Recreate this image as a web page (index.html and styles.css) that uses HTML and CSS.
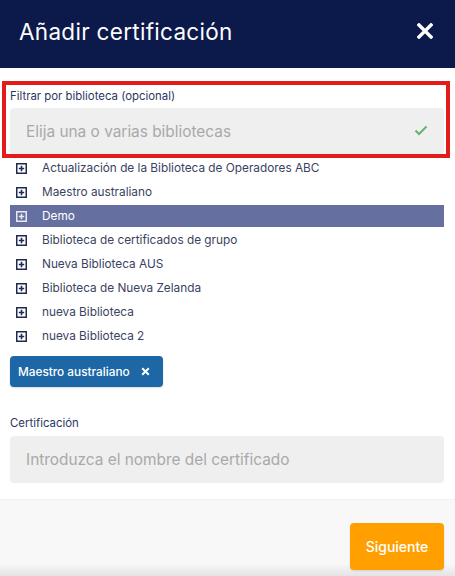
FILE: index.html
```html
<!DOCTYPE html>
<html lang="es">
<head>
<meta charset="utf-8">
<link rel="stylesheet" href="styles.css">
</head>
<body>
<div class="modal">
  <header class="head">
    <h1 class="title">Añadir certificación</h1>
    <svg class="close" width="16" height="16" viewBox="0 0 16 16"><path d="M2 2 L14 14 M14 2 L2 14" stroke="#fff" stroke-width="3.4" stroke-linecap="square"/></svg>
  </header>
  <main class="body">
    <div class="field filter">
      <label class="label">Filtrar por biblioteca (opcional)</label>
      <div class="input">
        <span class="ph">Elija una o varias bibliotecas</span>
        <svg class="check" width="14" height="11" viewBox="0 0 14 11"><path d="M1.5 5.5 L5 9 L12.5 1.5" fill="none" stroke="#66b46a" stroke-width="2"/></svg>
      </div>
      <div class="highlight"></div>
    </div>
    <ul class="tree">
      <li class="row"><svg class="plus" width="11" height="11" viewBox="0 0 11 11"><rect x="0.75" y="0.75" width="9.5" height="9.5" fill="none" stroke="currentColor" stroke-width="1.5"/><path d="M5.5 2.8 V8.2 M2.8 5.5 H8.2" stroke="currentColor" stroke-width="1.6"/></svg><span>Actualización de la Biblioteca de Operadores ABC</span></li>
      <li class="row"><svg class="plus" width="11" height="11" viewBox="0 0 11 11"><rect x="0.75" y="0.75" width="9.5" height="9.5" fill="none" stroke="currentColor" stroke-width="1.5"/><path d="M5.5 2.8 V8.2 M2.8 5.5 H8.2" stroke="currentColor" stroke-width="1.6"/></svg><span>Maestro australiano</span></li>
      <li class="row active"><svg class="plus" width="11" height="11" viewBox="0 0 11 11"><rect x="0.75" y="0.75" width="9.5" height="9.5" fill="none" stroke="currentColor" stroke-width="1.5"/><path d="M5.5 2.8 V8.2 M2.8 5.5 H8.2" stroke="currentColor" stroke-width="1.6"/></svg><span>Demo</span></li>
      <li class="row"><svg class="plus" width="11" height="11" viewBox="0 0 11 11"><rect x="0.75" y="0.75" width="9.5" height="9.5" fill="none" stroke="currentColor" stroke-width="1.5"/><path d="M5.5 2.8 V8.2 M2.8 5.5 H8.2" stroke="currentColor" stroke-width="1.6"/></svg><span>Biblioteca de certificados de grupo</span></li>
      <li class="row"><svg class="plus" width="11" height="11" viewBox="0 0 11 11"><rect x="0.75" y="0.75" width="9.5" height="9.5" fill="none" stroke="currentColor" stroke-width="1.5"/><path d="M5.5 2.8 V8.2 M2.8 5.5 H8.2" stroke="currentColor" stroke-width="1.6"/></svg><span>Nueva Biblioteca AUS</span></li>
      <li class="row"><svg class="plus" width="11" height="11" viewBox="0 0 11 11"><rect x="0.75" y="0.75" width="9.5" height="9.5" fill="none" stroke="currentColor" stroke-width="1.5"/><path d="M5.5 2.8 V8.2 M2.8 5.5 H8.2" stroke="currentColor" stroke-width="1.6"/></svg><span>Biblioteca de Nueva Zelanda</span></li>
      <li class="row"><svg class="plus" width="11" height="11" viewBox="0 0 11 11"><rect x="0.75" y="0.75" width="9.5" height="9.5" fill="none" stroke="currentColor" stroke-width="1.5"/><path d="M5.5 2.8 V8.2 M2.8 5.5 H8.2" stroke="currentColor" stroke-width="1.6"/></svg><span>nueva Biblioteca</span></li>
      <li class="row"><svg class="plus" width="11" height="11" viewBox="0 0 11 11"><rect x="0.75" y="0.75" width="9.5" height="9.5" fill="none" stroke="currentColor" stroke-width="1.5"/><path d="M5.5 2.8 V8.2 M2.8 5.5 H8.2" stroke="currentColor" stroke-width="1.6"/></svg><span>nueva Biblioteca 2</span></li>
    </ul>
    <div class="tags">
      <span class="tag">Maestro australiano <svg class="tag-x" width="9" height="9" viewBox="0 0 9 9"><path d="M1.2 1.2 L7.8 7.8 M7.8 1.2 L1.2 7.8" stroke="#fff" stroke-width="2"/></svg></span>
    </div>
    <div class="field cert">
      <label class="label">Certificación</label>
      <div class="input">
        <span class="ph">Introduzca el nombre del certificado</span>
      </div>
    </div>
  </main>
  <footer class="foot">
    <button class="next">Siguiente</button>
  </footer>
</div>
</body>
</html>
```
FILE: styles.css
```css
* { box-sizing: border-box; }
html, body { margin: 0; padding: 0; background: #fff; }
body { font-family: Inter, "Noto Sans", sans-serif; width: 455px; height: 576px; overflow: hidden; }
.modal { display: flex; flex-direction: column; height: 576px; }
.head {
  height: 68px; background: #0b1a4b; display: flex; align-items: center;
  justify-content: space-between; padding: 0 22px 6px 19px;
}
.title { margin: 0; color: #fff; font-weight: 400; font-size: 22.5px; letter-spacing: 0.3px; }
.close { display: block; }
.body { padding: 0 11px 0 10px; flex: 1; }
.field { display: flex; flex-direction: column; }
.filter { position: relative; padding-top: 21px; }
.label { font-size: 11.4px; color: #2c3763; height: 19px; line-height: 14px; }
.input {
  height: 47px; background: #efefef; border-radius: 4px; display: flex;
  align-items: center; justify-content: space-between; padding: 0 16px;
}
.ph { color: #a9a9a9; font-size: 15.4px; }
.check { margin-right: 0; margin-top: -2px; }
.highlight {
  position: absolute; left: -8px; right: -6px; top: 13px; bottom: -3px;
  border: 4px solid #e31b1b; pointer-events: none;
}
.tree { list-style: none; margin: 2px 0 0; padding: 0; }
.row {
  height: 22px; margin-bottom: 2px; display: flex; align-items: center;
  font-size: 11.8px; color: #3b4261; padding-left: 6px; gap: 15px;
}
.row .plus { color: #1f2a52; flex: none; }
.row.active { background: #6570a0; color: #fff; }
.row.active .plus { color: #e8eaf3; }
.tags { padding-top: 7px; display: flex; }
.tag {
  background: #1d67a6; color: #fff; font-size: 11.8px; font-weight: 500;
  height: 31px; border-radius: 4px; display: inline-flex; align-items: center;
  padding: 0 13px 0 8px; gap: 11px; box-shadow: 0 1px 2px rgba(0,0,0,0.15);
}
.cert { padding-top: 29px; }
.cert .label { height: 20px; }
.foot {
  height: 77px; border-top: 1px solid #f0f0f0;
  background: linear-gradient(#f8f8f8 0, #f8f8f8 64px, #e2e2e2 77px);
  display: flex; justify-content: flex-end; align-items: flex-start;
  padding: 23px 11px 0 0; margin-top: 0;
}
.next {
  width: 94px; height: 47px; border: none; border-radius: 4px;
  background: #ffa000; color: #fff; font-family: inherit; font-size: 14px;
  font-weight: 500; box-shadow: 0 1px 2px rgba(0,0,0,0.12);
}
```
